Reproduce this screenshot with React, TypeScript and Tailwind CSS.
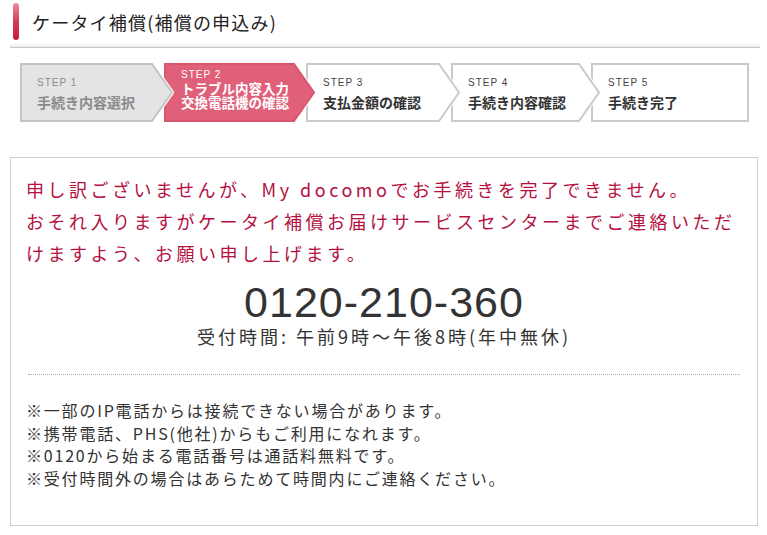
import React from "react"

interface Step {
  no: string
  lines: string[]
  width: number
  kind: "done" | "current" | "todo"
  last?: boolean
}

const steps: Step[] = [
  { no: "STEP 1", lines: ["手続き内容選択"], width: 144, kind: "done" },
  { no: "STEP 2", lines: ["トラブル内容入力", "交換電話機の確認"], width: 142, kind: "current" },
  { no: "STEP 3", lines: ["支払金額の確認"], width: 145, kind: "todo" },
  { no: "STEP 4", lines: ["手続き内容確認"], width: 140, kind: "todo" },
  { no: "STEP 5", lines: ["手続き完了"], width: 158, kind: "todo", last: true },
]

const zs = ["z-[5]", "z-[4]", "z-[3]", "z-[2]", "z-[1]"]

function StepShape({ step }: { step: Step }) {
  const w = step.width
  const fill = step.kind === "done" ? "#e4e4e4" : step.kind === "current" ? "#e0607a" : "#ffffff"
  const stroke = step.kind === "done" ? "#c4c4c4" : step.kind === "current" ? "#d9566f" : "#cacaca"
  const points = step.last
    ? `1,1 ${w - 1},1 ${w - 1},58 1,58`
    : `1,1 ${w - 12},1 ${w + 8},29.5 ${w - 12},58 1,58`
  return (
    <svg
      className="absolute left-0 top-0 overflow-visible"
      width={w + 10}
      height={59}
      viewBox={`0 0 ${w + 10} 59`}
    >
      {!step.last && (
        <polygon points={points} fill="none" stroke="#ffffff" strokeWidth={4} strokeLinejoin="round" />
      )}
      <polygon points={points} fill={fill} stroke={stroke} strokeWidth={2} />
    </svg>
  )
}

function StepItem({ step, index }: { step: Step; index: number }) {
  const current = step.kind === "current"
  const noColor = step.kind === "done" ? "text-[#8c8c8c]" : current ? "text-white" : "text-[#444]"
  const labelColor = step.kind === "done" ? "text-[#8a8a8a]" : current ? "text-white" : "text-[#333]"
  return (
    <div className={`relative h-[59px] shrink-0 ${zs[index]}`} style={{ width: step.width }}>
      <StepShape step={step} />
      <div className={`relative flex flex-col pl-[17px] ${current ? "pt-[6px]" : "pt-[14px]"}`}>
        <span
          className={`text-[10px] leading-[12px] tracking-[1px] ${noColor}`}
          style={{ fontFamily: '"Liberation Sans", Arial, sans-serif' }}
        >
          {step.no}
        </span>
        {current ? (
          <div className="flex flex-col">
            {step.lines.map((l) => (
              <span key={l} className={`text-[13.5px] leading-[14px] font-bold ${labelColor}`}>
                {l}
              </span>
            ))}
          </div>
        ) : (
          <span className={`mt-[4px] text-[14px] leading-[18px] font-bold ${labelColor}`}>{step.lines[0]}</span>
        )}
      </div>
    </div>
  )
}

export default function App() {
  return (
    <div
      className="h-[535px] w-[767px] overflow-hidden bg-white"
      style={{ fontFamily: '"Noto Sans CJK JP", "Noto Sans", sans-serif' }}
    >
      <header className="flex h-[43px] items-start pl-[13px] pt-[3px]">
        <div className="h-[37px] w-[6px] rounded-[3px] bg-gradient-to-b from-[#e88a98] via-[#d43c58] to-[#c21d3c]" />
        <h1 className="ml-[13px] mt-[8px] text-[18px] leading-[22px] tracking-[1.2px] text-[#222]">
          ケータイ補償(補償の申込み)
        </h1>
      </header>
      <div className="mx-[10px] h-[5px] w-[750px] border-b border-[#c8c8c8] bg-gradient-to-b from-white to-[#ececec]" />

      <div className="ml-[20px] mt-[15px] flex">
        {steps.map((s, i) => (
          <StepItem key={s.no} step={s} index={i} />
        ))}
      </div>

      <main className="ml-[10px] mt-[35px] h-[369px] w-[748px] border border-[#cfcfcf] px-[15px] pt-[15px]">
        <div className="whitespace-nowrap text-[18px] leading-[32px] tracking-[3.5px] text-[#b5103f]">
          <p>申し訳ございませんが、My docomoでお手続きを完了できません。</p>
          <p>おそれ入りますがケータイ補償お届けサービスセンターまでご連絡いただ</p>
          <p>けますよう、お願い申し上げます。</p>
        </div>

        <div className="mt-[11px] flex flex-col items-center">
          <p
            className="text-[43px] leading-[44px] tracking-[1px] text-[#333]"
            style={{ fontFamily: '"Liberation Sans", Arial, sans-serif' }}
          >
            0120-210-360
          </p>
          <p className="text-[18px] leading-[24px] tracking-[3px] text-[#333]">
            受付時間: 午前9時～午後8時(年中無休)
          </p>
        </div>

        <div className="mx-[2px] mt-[26px] border-t border-dotted border-[#aaa]" />

        <ul className="mt-[24px] whitespace-nowrap text-[16px] leading-[22.5px] tracking-[1.8px] text-[#333]">
          <li>※一部のIP電話からは接続できない場合があります。</li>
          <li>※携帯電話、PHS(他社)からもご利用になれます。</li>
          <li>※0120から始まる電話番号は通話料無料です。</li>
          <li>※受付時間外の場合はあらためて時間内にご連絡ください。</li>
        </ul>
      </main>
    </div>
  )
}
